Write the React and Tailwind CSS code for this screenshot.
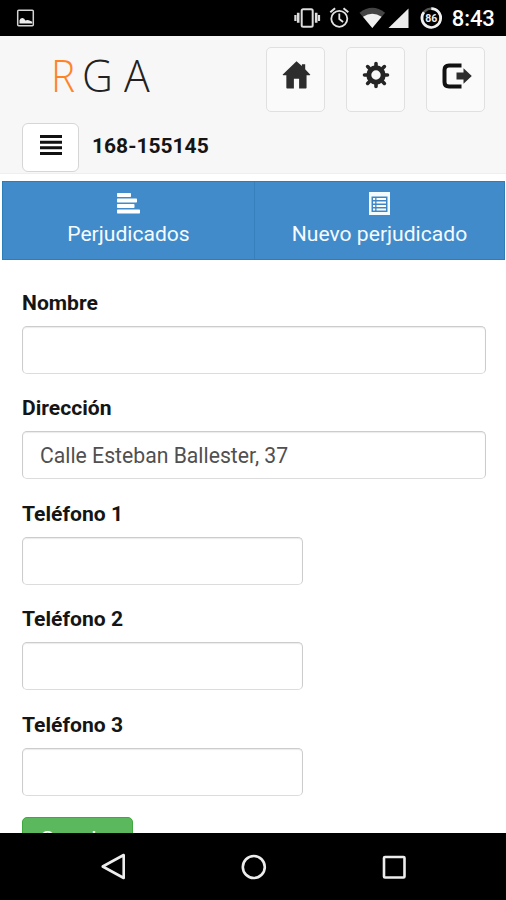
function StatusBar() {
  return (
    <div className="flex h-[35.5px] shrink-0 items-center bg-black">
      <svg width="506" height="35" viewBox="0 0 506 35" fill="none" className="block">
        <g>
          <rect x="17.7" y="10.2" width="15.6" height="15.6" rx="1" stroke="#d4d4d4" strokeWidth="1.5" />
          <path d="M19.5 23.5v-3.3q1-2.3 3-2.2t2.8 2.4q2.4-1 4.2 0l2.7 1.4v1.7z" fill="#eee" />
        </g>
        <g stroke="#ddd">
          <rect x="301.7" y="9.2" width="11" height="17.6" rx="1.5" strokeWidth="2" />
          <path d="M298.2 12.7v10M316.2 12.7v10" strokeWidth="2.6" />
          <path d="M295.4 15v6M319 15v6" strokeWidth="2.2" />
        </g>
        <g stroke="#e2e2e2" strokeWidth="1.8">
          <circle cx="339.3" cy="18.8" r="8" />
          <path d="M339.3 13.5v5.5l3.8 3" />
          <path d="M330.3 12.2l4.8-4M348.3 12.2l-4.8-4" strokeWidth="2" />
        </g>
        <path d="M359.5 12.8q12.8-10 25.6 0L372.3 28z" fill="#444" />
        <path d="M363 16.8q9.3-6 18.6 0L372.3 28z" fill="#f0f0f0" />
        <path d="M408.5 8.5V28h-20z" fill="#ececec" />
        <circle cx="431.3" cy="18" r="9.4" stroke="#555" strokeWidth="2.4" />
        <path d="M431.3 8.6a9.4 9.4 0 1 1-7.4 3.6" stroke="#f0f0f0" strokeWidth="2.6" />
        <text x="431.3" y="21.8" textAnchor="middle" fill="#eee" className="font-['Roboto',sans-serif] text-[10.5px] font-bold">86</text>
        <text x="451.8" y="26.4" fill="#fff" textLength="43" className="font-['Roboto',sans-serif] text-[22px] font-medium">8:43</text>
      </svg>
    </div>
  );
}

function HomeIcon() {
  return (
    <svg width="29" height="30" viewBox="0 0 30 30" className="ml-[2px] block" fill="#2d2d2d">
      <path d="M15 .8L.8 14.4q-.4.8.6.8H4.5V28.3q0 .7.8.7h7V18.8h5.4V29h6.900q.8 0 .8-.7V15.2h3.200q1 0 .5-.8L24 9V3.800h-3.400v2z" />
    </svg>
  );
}

function GearIcon() {
  return (
    <svg width="28" height="28" viewBox="-14 -14 28 28" className="block">
      <circle r="7.2" fill="none" stroke="#252525" strokeWidth="5" />
      <path
        d="M0-9v-2.500M0 9v2.500M-9 0h-2.500M9 0h2.500M-6.700-6.700l-1.700-1.700M6.700 6.700l1.700 1.700M-6.700 6.700l-1.700 1.700M6.700-6.700l1.700-1.700"
        stroke="#252525"
        strokeWidth="3.6"
        strokeLinecap="round"
      />
    </svg>
  );
}

function LogoutIcon() {
  return (
    <svg width="30" height="26" viewBox="0 0 30 26" className="mt-[2px] ml-[2px] block">
      <path d="M19.500 2.500H7Q2.500 2.500 2.500 7v12q0 4.500 4.500 4.500h12.500" fill="none" stroke="#111" strokeWidth="4" />
      <path d="M14.500 9.500h7V5.200l8.300 7.800-8.300 7.800v-4.300h-7z" fill="#2d2d2d" />
    </svg>
  );
}

function NavButton({ children }) {
  return (
    <button className="flex h-[65px] w-[59px] items-center justify-center rounded-[5px] border border-[#e0e0e0] bg-[#fafafa] pb-[8px]">
      {children}
    </button>
  );
}

function Header() {
  return (
    <header className="h-[138.5px] shrink-0 border-b border-[#efefef] bg-[#f7f7f7]">
      <div className="flex pt-[11px] pr-[21px]">
        <div className="flex h-[65px] flex-1 pl-[50.5px] font-['Open_Sans',sans-serif] text-[45px] leading-[55px] font-light text-[#222]">
          <span className="w-[31.5px] origin-left scale-x-90 text-[#ff8427]">R</span>
          <span className="w-[41.5px] origin-left scale-x-95">G</span>
          <span className="origin-left scale-x-95">A</span>
        </div>
        <div className="flex gap-[21px]">
          <NavButton><HomeIcon /></NavButton>
          <NavButton><GearIcon /></NavButton>
          <NavButton><LogoutIcon /></NavButton>
        </div>
      </div>
      <div className="mt-[11px] flex items-center pl-[22px]">
        <button className="flex h-[49px] w-[57px] items-center justify-center rounded-[6px] border border-[#d6d6d6] bg-white pb-[4px]">
          <svg width="22" height="20" viewBox="0 0 22 20" fill="#111" className="block">
            <path d="M0 0h22v3H0zM0 5.700h22v3H0zM0 11.300h22v3H0zM0 17h22v3H0z" />
          </svg>
        </button>
        <span className="ml-[13px] pb-[2px] text-[21px] leading-[28px] font-bold text-[#151515]">168-155145</span>
      </div>
    </header>
  );
}

function Tabs() {
  return (
    <nav className="mt-[7px] mr-px ml-[2px] flex h-[79px] shrink-0 border border-[#2c7db8] bg-[#428bca] text-[21.1px] leading-[28px] text-[#f4fbff]">
      <a className="flex w-[252px] flex-col items-center border-r border-[#3580bd] pt-[11px]">
        <svg width="23" height="21" viewBox="0 0 23 21" fill="#fff" className="block">
          <rect y="0" width="14" height="4" rx=".7" />
          <rect y="5.500" width="20" height="4" rx=".7" />
          <rect y="11" width="17.500" height="4" rx=".7" />
          <rect y="16.500" width="23" height="4" rx=".7" />
        </svg>
        <span className="mt-[6px]">Perjudicados</span>
      </a>
      <a className="flex flex-1 flex-col items-center pt-[10px]">
        <svg width="21" height="23" viewBox="0 0 21 23" className="block">
          <path d="M0 0h21v23H0z" fill="#f4fbff" />
          <path d="M2.500 4.500h16v15.500h-16z" fill="#3f87c4" />
          <path d="M4 6h2.200v2H4zM7.500 6H17v2H7.500zM4 9.500h2.200v2H4zM7.500 9.500H17v2H7.500zM4 13h2.200v2H4zM7.500 13H17v2H7.500zM4 16.500h2.200v2H4zM7.500 16.500H17v2H7.500z" fill="#fff" />
        </svg>
        <span className="mt-[5px]">Nuevo perjudicado</span>
      </a>
    </nav>
  );
}

function Field({ label, value, short }) {
  return (
    <label className="block h-[105.5px]">
      <span className="block h-[37px] text-[21.1px] leading-[28px] font-bold text-[#151515]">{label}</span>
      <input
        type="text"
        defaultValue={value}
        className={
          "block h-[48px] rounded-[5px] border border-[#ccc] border-b-[#dcdcdc] bg-white px-[17px] text-[21.2px] text-[#505050] shadow-[inset_0_1px_1px_rgba(0,0,0,0.08)] outline-none " +
          (short ? "w-[281px]" : "w-full")
        }
      />
    </label>
  );
}

function AndroidNav() {
  return (
    <div className="flex h-[67px] shrink-0 bg-black">
      <svg width="506" height="67" viewBox="0 0 506 67" fill="none" stroke="#ededed" strokeWidth="2.6" className="block">
        <path d="M102.700 33.500L123.700 22v23z" strokeLinejoin="round" />
        <circle cx="253.8" cy="34" r="11" />
        <rect x="384" y="24" width="20.5" height="20.5" rx="1" />
      </svg>
    </div>
  );
}

export default function App() {
  return (
    <div className="flex h-[900px] w-[506px] flex-col overflow-hidden bg-white font-['Roboto',sans-serif]">
      <StatusBar />
      <Header />
      <Tabs />
      <main className="min-h-0 flex-1 overflow-hidden pt-[28.5px] pr-[20.5px] pl-[22px]">
        <Field label="Nombre" />
        <Field label="Dirección" value="Calle Esteban Ballester, 37" />
        <Field label="Teléfono 1" short />
        <Field label="Teléfono 2" short />
        <Field label="Teléfono 3" short />
        <button className="mt-[0.5px] flex h-[48px] w-[111px] items-start justify-center rounded-[5px] border border-[#3fa83f] bg-[#5cb85c] pt-[7px] text-[21px] leading-[28px] text-white">
          Guardar
        </button>
      </main>
      <AndroidNav />
    </div>
  );
}
